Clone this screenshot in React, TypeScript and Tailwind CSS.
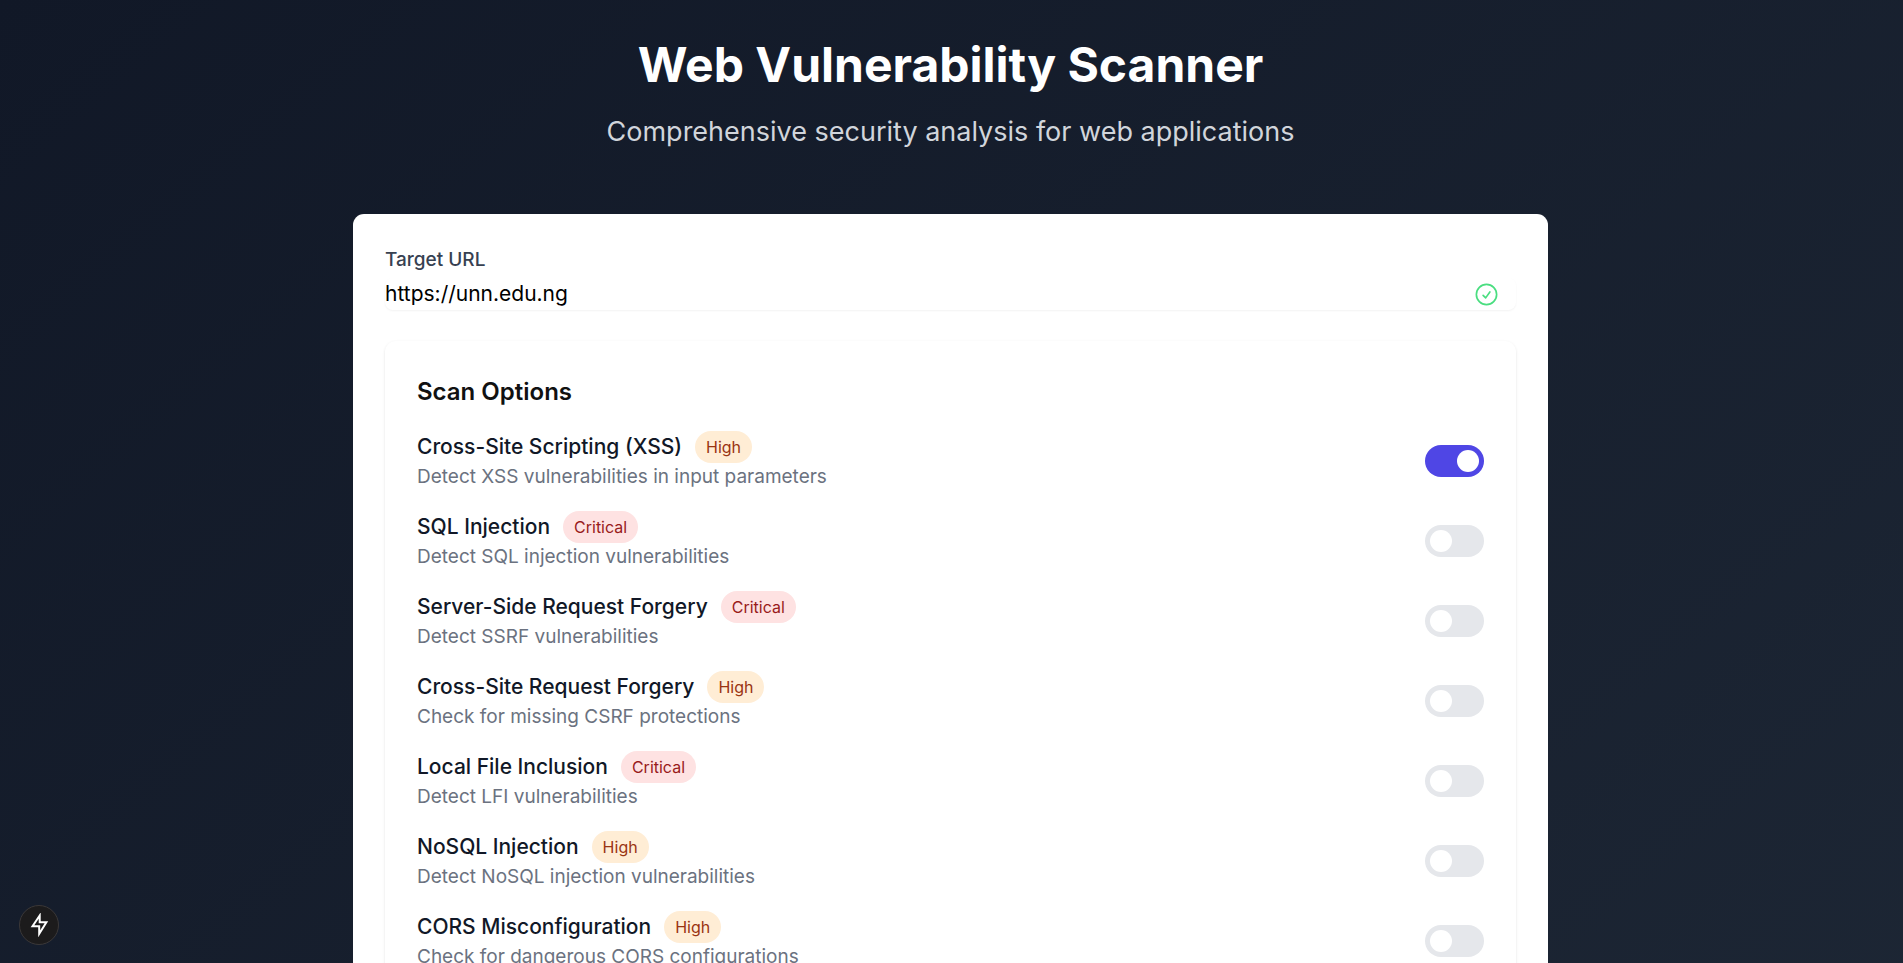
import { useState } from "react";

type Severity = "High" | "Critical";

interface ScanOption {
  id: string;
  name: string;
  description: string;
  severity: Severity;
}

const options: ScanOption[] = [
  { id: "xss", name: "Cross-Site Scripting (XSS)", description: "Detect XSS vulnerabilities in input parameters", severity: "High" },
  { id: "sqli", name: "SQL Injection", description: "Detect SQL injection vulnerabilities", severity: "Critical" },
  { id: "ssrf", name: "Server-Side Request Forgery", description: "Detect SSRF vulnerabilities", severity: "Critical" },
  { id: "csrf", name: "Cross-Site Request Forgery", description: "Check for missing CSRF protections", severity: "High" },
  { id: "lfi", name: "Local File Inclusion", description: "Detect LFI vulnerabilities", severity: "Critical" },
  { id: "nosqli", name: "NoSQL Injection", description: "Detect NoSQL injection vulnerabilities", severity: "High" },
  { id: "cors", name: "CORS Misconfiguration", description: "Check for dangerous CORS configurations", severity: "High" },
];

const badgeStyles: Record<Severity, string> = {
  High: "bg-[#ffedd5] text-[#9a3412]",
  Critical: "bg-[#fee2e2] text-[#991b1b]",
};

function OptionRow({ option, enabled, onToggle }: { option: ScanOption; enabled: boolean; onToggle: () => void }) {
  return (
    <li className="flex items-center justify-between">
      <div>
        <div className="flex h-8 items-center">
          <span id={option.id} className="text-[21px] leading-8 font-medium text-[#111827]">
            {option.name}
          </span>
          <span className={`ml-[13px] rounded-full px-[11px] py-1 text-base leading-6 ${badgeStyles[option.severity]}`}>
            {option.severity}
          </span>
        </div>
        <p className="text-[19px] leading-[27px] text-[#6b7280]">{option.description}</p>
      </div>
      <button
        type="button"
        role="switch"
        aria-checked={enabled}
        aria-labelledby={option.id}
        onClick={onToggle}
        className={`flex h-8 w-[59px] items-center rounded-full px-[5px] ${enabled ? "justify-end bg-[#4f46e5]" : "justify-start bg-[#e5e7eb]"}`}
      >
        <span className="size-[22px] rounded-full bg-white" />
      </button>
    </li>
  );
}

export default function App() {
  const [url, setUrl] = useState("https://unn.edu.ng");
  const [enabled, setEnabled] = useState<string[]>(["xss"]);

  const toggle = (id: string) =>
    setEnabled((current) => (current.includes(id) ? current.filter((item) => item !== id) : [...current, id]));

  return (
    <div className="h-screen overflow-hidden bg-[#1f2937] bg-linear-to-br from-[#111827] to-[#1f2937] bg-[length:100%_1600px] bg-no-repeat pr-[2px] font-['Inter',sans-serif]">
      <header className="pt-8 text-center">
        <h1 className="text-5xl leading-[66px] font-bold text-white">Web Vulnerability Scanner</h1>
        <p className="mt-4 text-[27px] leading-9 text-[#d1d5db]">Comprehensive security analysis for web applications</p>
      </header>
      <main className="mx-auto mt-16 w-full max-w-[1195px] rounded-[11px] bg-white p-8">
        <label htmlFor="target-url" className="block text-[19px] leading-[27px] font-medium text-[#374151]">
          Target URL
        </label>
        <div className="mt-[5px] flex items-center rounded-lg pr-4 shadow-xs">
          <input
            id="target-url"
            type="url"
            value={url}
            onChange={(event) => setUrl(event.target.value)}
            className="h-8 min-w-0 flex-1 bg-transparent text-[21px] leading-8 text-black outline-none"
          />
          <svg className="size-[27px] text-[#4ade80]" viewBox="0 0 24 24" fill="none" stroke="currentColor" strokeWidth="1.5" strokeLinecap="round" strokeLinejoin="round" aria-hidden="true">
            <path d="M9 12.75 11.25 15 15 9.75M21 12a9 9 0 1 1-18 0 9 9 0 0 1 18 0Z" />
          </svg>
        </div>
        <section className="mt-[31px] rounded-[11px] p-8 shadow-sm">
          <h2 className="text-2xl leading-[38px] font-semibold text-[#111111]">Scan Options</h2>
          <ul className="mt-5 space-y-[21px]">
            {options.map((option) => (
              <OptionRow key={option.id} option={option} enabled={enabled.includes(option.id)} onToggle={() => toggle(option.id)} />
            ))}
          </ul>
        </section>
      </main>
      <button type="button" aria-label="Developer tools" className="fixed bottom-[18px] left-[19px] flex size-10 items-center justify-center rounded-full border border-[#3b3838] bg-[#1c1b1c] text-white">
        <svg className="size-6" viewBox="0 0 24 24" fill="none" stroke="currentColor" strokeWidth="2">
          <path d="M12.7 2.5 5.5 13.2H12.2V20.8L19.4 9.2H12.7Z" />
        </svg>
      </button>
    </div>
  );
}
